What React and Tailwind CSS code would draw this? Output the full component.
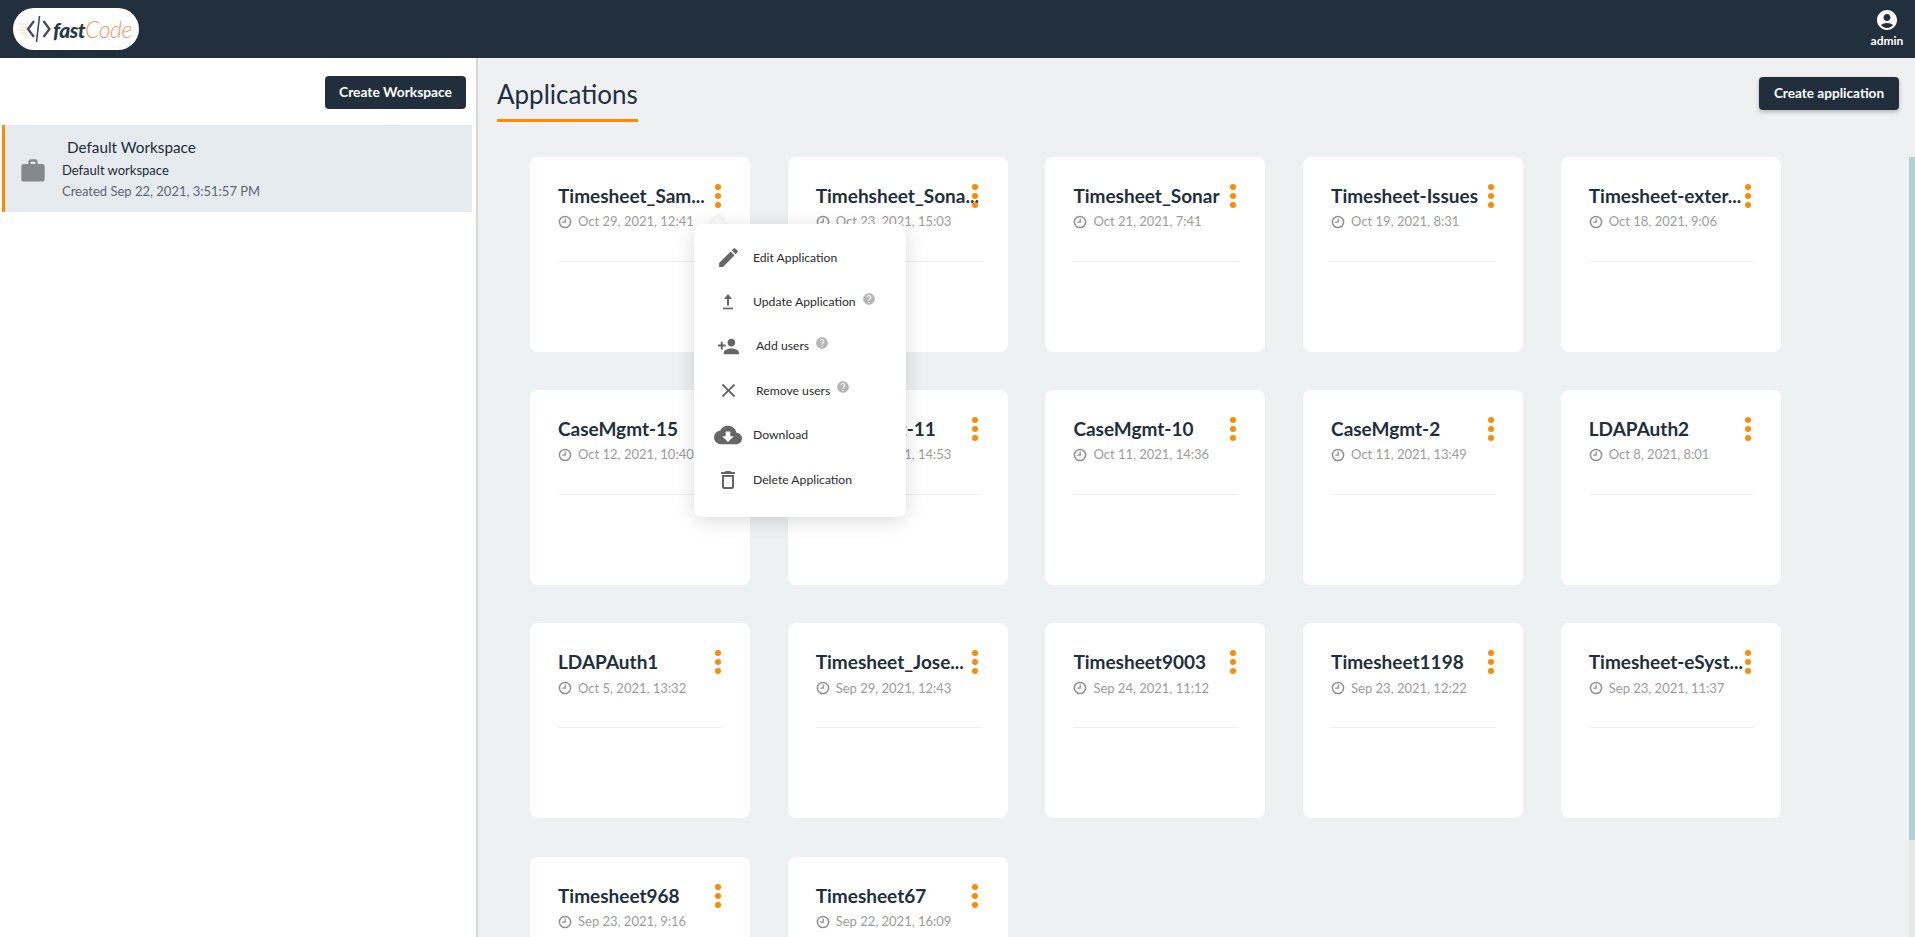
import { MdAccountCircle, MdWork, MdEdit, MdPersonAdd, MdClose, MdCloudDownload, MdDeleteOutline, MdHelp } from "react-icons/md";

const font = "font-['Lato','Open_Sans',sans-serif]";

const apps = [
    { name: "Timesheet_Sam...", date: "Oct 29, 2021, 12:41" },
    { name: "Timehsheet_Sona...", date: "Oct 23, 2021, 15:03" },
    { name: "Timesheet_Sonar", date: "Oct 21, 2021, 7:41" },
    { name: "Timesheet-Issues", date: "Oct 19, 2021, 8:31" },
    { name: "Timesheet-exter...", date: "Oct 18, 2021, 9:06" },
    { name: "CaseMgmt-15", date: "Oct 12, 2021, 10:40" },
    { name: "CaseMgmt-11", date: "Oct 11, 2021, 14:53" },
    { name: "CaseMgmt-10", date: "Oct 11, 2021, 14:36" },
    { name: "CaseMgmt-2", date: "Oct 11, 2021, 13:49" },
    { name: "LDAPAuth2", date: "Oct 8, 2021, 8:01" },
    { name: "LDAPAuth1", date: "Oct 5, 2021, 13:32" },
    { name: "Timesheet_Jose...", date: "Sep 29, 2021, 12:43" },
    { name: "Timesheet9003", date: "Sep 24, 2021, 11:12" },
    { name: "Timesheet1198", date: "Sep 23, 2021, 12:22" },
    { name: "Timesheet-eSyst...", date: "Sep 23, 2021, 11:37" },
    { name: "Timesheet968", date: "Sep 23, 2021, 9:16" },
    { name: "Timesheet67", date: "Sep 22, 2021, 16:09" },
];

function UploadIcon() {
    return (
        <svg width="24" height="24" viewBox="0 0 24 24" fill="#666">
            <path d="M12 4 8 9h3v6.5h2V9h3z" />
            <rect x="7" y="17.6" width="10" height="1.7" />
        </svg>
    );
}

const menu = [
    { label: "Edit Application", icon: <MdEdit size={25} color="#666" /> },
    { label: "Update Application", icon: <UploadIcon />, help: true },
    { label: "Add users", icon: <MdPersonAdd size={23} color="#666" />, help: true, shift: true },
    { label: "Remove users", icon: <MdClose size={23} color="#666" />, help: true, shift: true },
    { label: "Download", icon: <MdCloudDownload size={28} color="#666" /> },
    { label: "Delete Application", icon: <MdDeleteOutline size={24} color="#666" /> },
];

function Clock() {
    return (
        <svg width="14" height="14" viewBox="0 0 14 14" fill="none" stroke="#8f8f8f" strokeWidth="1.5" className="shrink-0">
            <circle cx="7" cy="7" r="5.6" />
            <path d="M7.2 3.4v3.8H4.2" strokeWidth="1.3" />
        </svg>
    );
}

function Logo() {
    return (
        <div className="flex h-[42px] w-[126px] items-center rounded-full bg-white pl-[5px]">
            <svg width="34" height="28" viewBox="0 0 34 28" fill="none" className="shrink-0">
                <path d="M0 9h11M3 12h7M0 15h9M3 18h8M6 21h6" stroke="#f6b48c" strokeWidth="1" opacity="0.55" />
                <path d="M16 6 10 14l6 8" stroke="#3d4a58" strokeWidth="2.2" />
                <path d="M21.5 1 18.5 27" stroke="#3d4a58" strokeWidth="1.6" />
                <path d="M25.5 6l6 8-6 8" stroke="#3d4a58" strokeWidth="2.2" />
            </svg>
            <span className="ml-[1px] leading-none tracking-[-0.5px] italic whitespace-nowrap font-['Lato',sans-serif]">
                <span className="text-[21px] font-black text-[#2a3744]">fast</span>
                <span className="text-[23px] font-light text-[#ee9a69]">Code</span>
            </span>
        </div>
    );
}

function Card({ name, date }) {
    return (
        <div className="relative h-[195px] w-[220px] rounded-[8px] bg-white pl-[28px] pr-[27px] pt-[28px]">
            <div className="h-[22px] whitespace-nowrap text-[19px] leading-[22px] font-bold text-[#212f3d]">{name}</div>
            <button className="absolute right-[29.5px] top-[27px] flex flex-col gap-[3px]">
                <span className="h-[6px] w-[6px] rounded-full bg-[#ff8c00]" />
                <span className="h-[6px] w-[6px] rounded-full bg-[#ff8c00]" />
                <span className="h-[6px] w-[6px] rounded-full bg-[#ff8c00]" />
            </button>
            <div className="mt-[6px] flex h-[18px] items-center gap-[6px] whitespace-nowrap text-[13px] text-[#9b9b9b]">
                <Clock />
                {date}
            </div>
            <div className="mt-[30px] h-px bg-[#eceeef]" />
        </div>
    );
}

function AppMenu() {
    return (
        <div className="absolute left-[216px] top-[74px] z-10">
            <div className="absolute left-[18px] top-[-5px] h-[12px] w-[12px] rotate-45 bg-white shadow-[-2px_-2px_4px_rgba(0,0,0,0.06)]" />
            <div className="relative h-[293px] w-[212px] rounded-[8px] bg-white pt-[11.5px] shadow-[0_4px_20px_rgba(0,0,0,0.14)]">
                {menu.map(({ label, icon, help, shift }) => (
                    <div key={label} className="flex h-[44.4px] items-center whitespace-nowrap text-[12.2px] text-[#2b2b2b]">
                        <div className="flex w-[59px] shrink-0 justify-center pl-[9px]">{icon}</div>
                        <span className={shift ? "ml-[3px]" : ""}>{label}</span>
                        {help && <MdHelp size={14} color="#b5b5b5" className="ml-[6px] mb-[7px]" />}
                    </div>
                ))}
            </div>
        </div>
    );
}

export default function App() {
    return (
        <div className={`flex h-screen flex-col overflow-hidden bg-white ${font}`}>
            <header className="flex h-[58px] shrink-0 items-center justify-between bg-[#222f3d] pl-[13px] pr-[11px]">
                <Logo />
                <div className="mb-[2px] flex w-[34px] flex-col items-center gap-[2px] text-white">
                    <MdAccountCircle size={24} />
                    <span className="text-[12px] leading-[14px] font-bold">admin</span>
                </div>
            </header>

            <div className="flex min-h-0 flex-1">
                <aside className="w-[478px] shrink-0 border-r-2 border-[#d6d8da] bg-white">
                    <div className="flex justify-end pr-[10px] pt-[18px]">
                        <button className="h-[33px] w-[141px] rounded-[4px] bg-[#212f3d] text-[13.8px] font-bold text-white">Create Workspace</button>
                    </div>
                    <div className="ml-[2px] mr-[4px] mt-[16px] flex h-[87px] items-center border-l-[3px] border-[#ff8c00] bg-[#e6ebef]">
                        <MdWork size={28} color="#85888d" className="ml-[14px] mt-[4px] shrink-0" />
                        <div className="ml-[15px]">
                            <div className="ml-[5px] text-[15.3px] leading-[22px] text-[#1e2a36]">Default Workspace</div>
                            <div className="mt-[2px] text-[13px] leading-[20px] text-[#1e2a36]">Default workspace</div>
                            <div className="mt-[1px] text-[13px] leading-[20px] text-[#5e6670]">Created Sep 22, 2021, 3:51:57 PM</div>
                        </div>
                    </div>
                </aside>

                <main className="flex min-w-0 flex-1 flex-col bg-[#eff0f2]">
                    <div className="flex h-[92px] shrink-0 items-start justify-between pl-[19px] pr-[16px]">
                        <h1 className="mt-[17px] border-b-[3px] border-[#ff8c00] pb-[6px] text-[26px] leading-[38px] text-[#212f3d]">Applications</h1>
                        <button className="mt-[19px] h-[33px] w-[140px] rounded-[4px] bg-[#212f3d] text-[13.6px] font-bold text-white shadow-[0_2px_4px_rgba(0,0,0,0.25)]">Create application</button>
                    </div>

                    <div className="relative flex min-h-0 flex-1 bg-[#edf1f2]">
                        <div className="min-w-0 flex-1 overflow-hidden pl-[52px] pt-[7px]">
                            <div className="grid grid-cols-[repeat(5,220px)] gap-x-[37.7px] gap-y-[38.2px]">
                                {apps.map((app) => (
                                    <Card key={app.name} {...app} />
                                ))}
                            </div>
                        </div>
                        <div className="mt-[7px] w-[6px] shrink-0 bg-[#e6e8e8]">
                            <div className="h-[683px] bg-[#b5ced2]" />
                        </div>
                        <AppMenu />
                    </div>
                </main>
            </div>
        </div>
    );
}
